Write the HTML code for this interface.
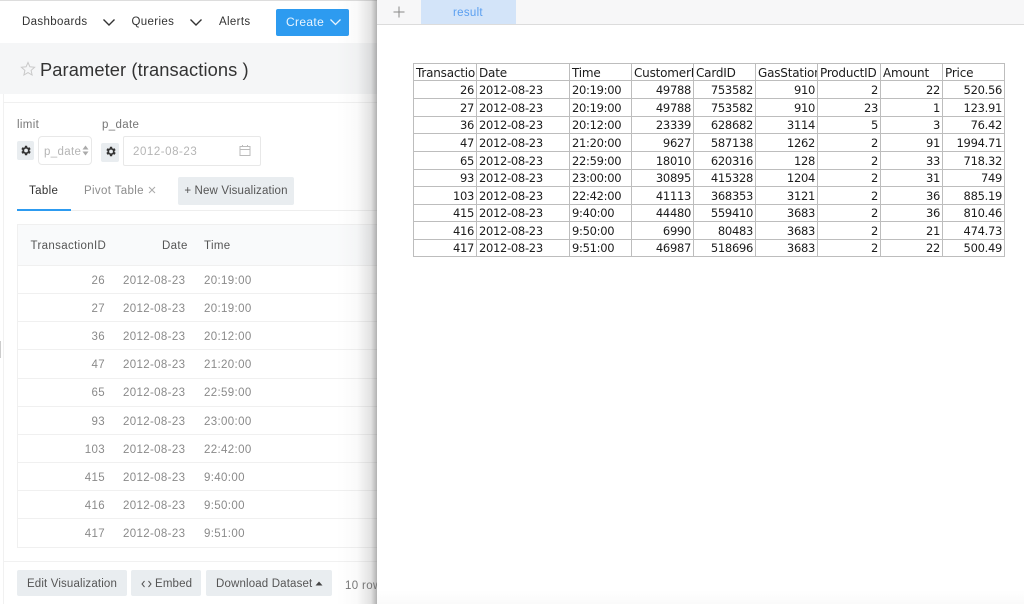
<!DOCTYPE html>
<html><head><meta charset="utf-8"><style>
html,body{margin:0;padding:0;width:1024px;height:604px;overflow:hidden;background:#fff}
body{position:relative;font-family:"Liberation Sans",sans-serif;color:#767676;font-size:11.5px}
.a{position:absolute;white-space:nowrap}
.t{letter-spacing:.35px;line-height:14px;margin-top:1px}
.b{position:absolute;background:#e9edf0;border-radius:2px;color:#555;font-size:11.5px;letter-spacing:.15px;line-height:29px;text-align:center;white-space:nowrap}
.hl{position:absolute;left:17px;width:360px;height:1px;background:#f0f0f0}
.r{position:absolute;text-align:right;width:80px;left:25px;color:#8a8a8a;letter-spacing:.35px;line-height:14px;margin-top:1px}
.d{position:absolute;left:123px;color:#8a8a8a;letter-spacing:.35px;line-height:14px;margin-top:1px}
.m{position:absolute;left:204px;color:#8a8a8a;letter-spacing:.35px;line-height:14px;margin-top:1px}
#tb{position:absolute;left:413px;top:63px;border-collapse:collapse;table-layout:fixed;width:591px;font-family:"DejaVu Sans",sans-serif;font-size:11.5px;letter-spacing:-.3px;color:#1c1c1c}
#tb td{border:1px solid #bdbdbd;padding:1px 2px 0;overflow:hidden;white-space:nowrap;text-align:right;line-height:13px;height:auto}
#tb td.l{text-align:left}
#tb tr:first-child td{text-align:left;font-size:12px;letter-spacing:-.2px;padding-top:2px;line-height:12px}
</style></head><body>
<div class="a" style="left:0;top:0;width:377px;height:1px;background:#ddd"></div>
<div class="a" style="left:0;top:1px;width:377px;height:42px;background:#fff"></div>
<div class="a" style="left:0;top:43px;width:377px;height:51px;background:#f5f6f7"></div>
<div class="a" style="left:3px;top:94px;width:1px;height:510px;background:#f1f1f1"></div>
<div class="a" style="left:3px;top:102px;width:374px;height:1px;background:#f0f0f0"></div>
<div class="a" style="left:0;top:341px;width:1px;height:17px;background:#ccc"></div>

<div class="a t" style="left:22px;top:14px;color:#333">Dashboards</div>
<svg class="a" style="left:102px;top:18px" width="14" height="9"><path d="M1.5 1.5 L7 7 L12.5 1.5" fill="none" stroke="#333" stroke-width="1.4"/></svg>
<div class="a t" style="left:131.500px;top:14px;color:#333">Queries</div>
<svg class="a" style="left:189px;top:18px" width="14" height="9"><path d="M1.5 1.5 L7 7 L12.5 1.5" fill="none" stroke="#333" stroke-width="1.4"/></svg>
<div class="a t" style="left:219px;top:14px;color:#333">Alerts</div>
<div class="a" style="left:276px;top:9px;width:73px;height:27px;background:#2d9bf0;border-radius:2px"></div>
<div class="a t" style="left:286px;top:14px;color:#e8f4fe;font-size:12px">Create</div>
<svg class="a" style="left:329px;top:18px" width="13" height="9"><path d="M1.5 1.5 L6.5 6.5 L11.5 1.5" fill="none" stroke="#e8f4fe" stroke-width="1.3"/></svg>

<svg class="a" style="left:20px;top:61px" width="16" height="16" viewBox="0 0 16 16"><path d="M8 1.5 L9.9 5.8 L14.6 6.3 L11.1 9.4 L12.1 14 L8 11.6 L3.9 14 L4.9 9.4 L1.4 6.3 L6.1 5.8 Z" fill="none" stroke="#c9c9c9" stroke-width="1"/></svg>
<div class="a" style="left:40px;top:59px;font-size:18.300px;line-height:22px;color:#333;letter-spacing:.1px">Parameter (transactions )</div>

<div class="a t" style="left:17px;top:117px">limit</div>
<div class="a t" style="left:102px;top:117px">p_date</div>
<div class="a" style="left:17px;top:141px;width:17px;height:19px;background:#e9edf0;border-radius:2px"></div>
<svg class="a" style="left:19px;top:144px" width="13" height="13" viewBox="0 0 24 24"><path fill="#333" d="M19.4 13a7.5 7.5 0 0 0 0-2l2.1-1.6-2-3.5-2.5 1a7.5 7.5 0 0 0-1.7-1L15 3.2h-4l-.4 2.7a7.500 7.500 0 0 0-1.700 1l-2.500-1-2 3.500L6.500 11a7.500 7.500 0 0 0 0 2l-2.100 1.600 2 3.500 2.500-1a7.500 7.500 0 0 0 1.700 1l.4 2.700h4l.4-2.700a7.500 7.500 0 0 0 1.700-1l2.500 1 2-3.500zM13 15.500a3.500 3.500 0 1 1 0-7 3.500 3.500 0 0 1 0 7z"/></svg>
<div class="a" style="left:38px;top:136px;width:52px;height:27px;border:1px solid #e8e8e8;border-radius:4px;background:#fff"></div>
<div class="a t" style="left:44px;top:144px;color:#b5b5b5">p_date</div>
<svg class="a" style="left:82px;top:145px" width="7" height="11"><path d="M3.500 0.500 L6.500 4.500 H0.500Z M3.500 10.500 L6.500 6.500 H0.500Z" fill="#aaa"/></svg>
<div class="a" style="left:101px;top:143px;width:18px;height:19px;background:#e9edf0;border-radius:2px"></div>
<svg class="a" style="left:104px;top:145px" width="13" height="13" viewBox="0 0 24 24"><path fill="#333" d="M19.4 13a7.5 7.5 0 0 0 0-2l2.1-1.6-2-3.5-2.5 1a7.5 7.5 0 0 0-1.7-1L15 3.2h-4l-.4 2.7a7.500 7.500 0 0 0-1.700 1l-2.500-1-2 3.500L6.500 11a7.500 7.500 0 0 0 0 2l-2.100 1.600 2 3.500 2.500-1a7.500 7.500 0 0 0 1.700 1l.4 2.700h4l.4-2.700a7.500 7.500 0 0 0 1.700-1l2.500 1 2-3.500zM13 15.500a3.500 3.500 0 1 1 0-7 3.500 3.500 0 0 1 0 7z"/></svg>
<div class="a" style="left:123px;top:136px;width:136px;height:28px;border:1px solid #e8e8e8;border-radius:2px;background:#fff"></div>
<div class="a t" style="left:133px;top:144px;color:#b5b5b5;letter-spacing:.55px">2012-08-23</div>
<svg class="a" style="left:239px;top:144px" width="12" height="13"><path d="M1 2.500H11V11.500H1Z M1 5.500H11 M3.500 1V3 M8.500 1V3" fill="none" stroke="#bbb" stroke-width="1"/></svg>

<div class="a" style="left:17px;top:210px;width:360px;height:1px;background:#eee"></div>
<div class="a" style="left:17px;top:209px;width:54px;height:2px;background:#2d9bf0"></div>
<div class="a t" style="left:29px;top:183px;color:#333">Table</div>
<div class="a t" style="left:84px;top:183px;color:#8c8c8c">Pivot Table</div>
<svg class="a" style="left:148px;top:186px" width="8" height="8"><path d="M1 1L7 7M7 1L1 7" stroke="#aaa" stroke-width="1"/></svg>
<div class="b" style="left:178px;top:177px;width:116px;height:28px;line-height:28px">+ New Visualization</div>

<div class="a" style="left:17px;top:224px;width:360px;height:41px;background:#f9fafb"></div>
<div class="hl" style="top:224px"></div>
<div class="hl" style="top:265px"></div>
<div class="a" style="left:17px;top:224px;width:1px;height:323px;background:#f0f0f0"></div>
<div class="a t" style="left:30.500px;top:238px;color:#555">TransactionID</div>
<div class="a t" style="left:162px;top:238px;color:#555">Date</div>
<div class="a t" style="left:204px;top:238px;color:#555">Time</div>

<div class="hl" style="top:293px"></div><div class="hl" style="top:321px"></div><div class="hl" style="top:349px"></div><div class="hl" style="top:378px"></div><div class="hl" style="top:406px"></div><div class="hl" style="top:434px"></div><div class="hl" style="top:462px"></div><div class="hl" style="top:490px"></div><div class="hl" style="top:518px"></div><div class="hl" style="top:547px"></div>

<div class="r" style="top:273px">26</div><div class="d" style="top:273px">2012-08-23</div><div class="m" style="top:273px">20:19:00</div>
<div class="r" style="top:301px">27</div><div class="d" style="top:301px">2012-08-23</div><div class="m" style="top:301px">20:19:00</div>
<div class="r" style="top:329px">36</div><div class="d" style="top:329px">2012-08-23</div><div class="m" style="top:329px">20:12:00</div>
<div class="r" style="top:357px">47</div><div class="d" style="top:357px">2012-08-23</div><div class="m" style="top:357px">21:20:00</div>
<div class="r" style="top:385px">65</div><div class="d" style="top:385px">2012-08-23</div><div class="m" style="top:385px">22:59:00</div>
<div class="r" style="top:414px">93</div><div class="d" style="top:414px">2012-08-23</div><div class="m" style="top:414px">23:00:00</div>
<div class="r" style="top:442px">103</div><div class="d" style="top:442px">2012-08-23</div><div class="m" style="top:442px">22:42:00</div>
<div class="r" style="top:470px">415</div><div class="d" style="top:470px">2012-08-23</div><div class="m" style="top:470px">9:40:00</div>
<div class="r" style="top:498px">416</div><div class="d" style="top:498px">2012-08-23</div><div class="m" style="top:498px">9:50:00</div>
<div class="r" style="top:526px">417</div><div class="d" style="top:526px">2012-08-23</div><div class="m" style="top:526px">9:51:00</div>

<div class="a" style="left:3px;top:561px;width:374px;height:1px;background:#f1f1f1"></div>
<div class="b" style="left:17px;top:570px;width:110px;height:26px;line-height:28px">Edit Visualization</div>
<div class="b" style="left:131px;top:570px;width:70px;height:26px;line-height:28px;text-align:left;text-indent:24px">Embed</div>
<svg class="a" style="left:141px;top:580px" width="11" height="8"><path d="M3.500 1L1 4L3.500 7M7.500 1L10 4L7.500 7" fill="none" stroke="#555" stroke-width="1"/></svg>
<div class="b" style="left:206px;top:570px;width:126px;height:26px;line-height:28px;text-align:left;text-indent:10px">Download Dataset</div>
<svg class="a" style="left:315px;top:581px" width="8" height="5"><path d="M4 0.500L7.500 4.500H0.500Z" fill="#444"/></svg>
<div class="a t" style="left:345px;top:577px;margin-top:2px">10 rows</div>

<div class="a" style="left:337px;top:0;width:40px;height:604px;background:linear-gradient(to right,rgba(120,120,120,0),rgba(120,120,120,.04) 50%,rgba(110,110,110,.2) 85%,rgba(100,100,100,.5))"></div>

<div class="a" style="left:377px;top:0;width:647px;height:604px;background:#fff;overflow:hidden">
 <div class="a" style="left:0;top:0;width:647px;height:24px;background:#f7f7f8;border-bottom:1px solid #dcdcdc"></div>
 <svg class="a" style="left:16px;top:6px" width="12" height="12"><path d="M6 .5V11.500M.5 6H11.500" stroke="#888" stroke-width="1"/></svg>
 <div class="a" style="left:44px;top:0;width:95px;height:24px;background:#d3e4f9"></div>
 <div class="a" style="left:76px;top:6px;color:#5a9ff0;font-size:11.5px;letter-spacing:.3px;line-height:14px">result</div>
 <div class="a" style="left:0;top:590px;width:647px;height:14px;background:linear-gradient(to bottom,#fff,#fafafa)"></div>
</div>

<table id="tb"><colgroup><col style="width:63px"><col style="width:93px"><col style="width:62px"><col style="width:62px"><col style="width:62px"><col style="width:62px"><col style="width:63px"><col style="width:62px"><col style="width:62px"></colgroup>
<tr style="height:17px"><td>Transaction</td><td>Date</td><td>Time</td><td>CustomerID</td><td>CardID</td><td>GasStationID</td><td>ProductID</td><td>Amount</td><td>Price</td></tr>
<tr style="height:18px"><td>26</td><td class="l">2012-08-23</td><td class="l">20:19:00</td><td>49788</td><td>753582</td><td>910</td><td>2</td><td>22</td><td>520.56</td></tr>
<tr style="height:18px"><td>27</td><td class="l">2012-08-23</td><td class="l">20:19:00</td><td>49788</td><td>753582</td><td>910</td><td>23</td><td>1</td><td>123.91</td></tr>
<tr style="height:17px"><td>36</td><td class="l">2012-08-23</td><td class="l">20:12:00</td><td>23339</td><td>628682</td><td>3114</td><td>5</td><td>3</td><td>76.42</td></tr>
<tr style="height:18px"><td>47</td><td class="l">2012-08-23</td><td class="l">21:20:00</td><td>9627</td><td>587138</td><td>1262</td><td>2</td><td>91</td><td>1994.71</td></tr>
<tr style="height:18px"><td>65</td><td class="l">2012-08-23</td><td class="l">22:59:00</td><td>18010</td><td>620316</td><td>128</td><td>2</td><td>33</td><td>718.32</td></tr>
<tr style="height:17px"><td>93</td><td class="l">2012-08-23</td><td class="l">23:00:00</td><td>30895</td><td>415328</td><td>1204</td><td>2</td><td>31</td><td>749</td></tr>
<tr style="height:18px"><td>103</td><td class="l">2012-08-23</td><td class="l">22:42:00</td><td>41113</td><td>368353</td><td>3121</td><td>2</td><td>36</td><td>885.19</td></tr>
<tr style="height:17px"><td>415</td><td class="l">2012-08-23</td><td class="l">9:40:00</td><td>44480</td><td>559410</td><td>3683</td><td>2</td><td>36</td><td>810.46</td></tr>
<tr style="height:18px"><td>416</td><td class="l">2012-08-23</td><td class="l">9:50:00</td><td>6990</td><td>80483</td><td>3683</td><td>2</td><td>21</td><td>474.73</td></tr>
<tr style="height:17px"><td>417</td><td class="l">2012-08-23</td><td class="l">9:51:00</td><td>46987</td><td>518696</td><td>3683</td><td>2</td><td>22</td><td>500.49</td></tr>
</table>
</body></html>
